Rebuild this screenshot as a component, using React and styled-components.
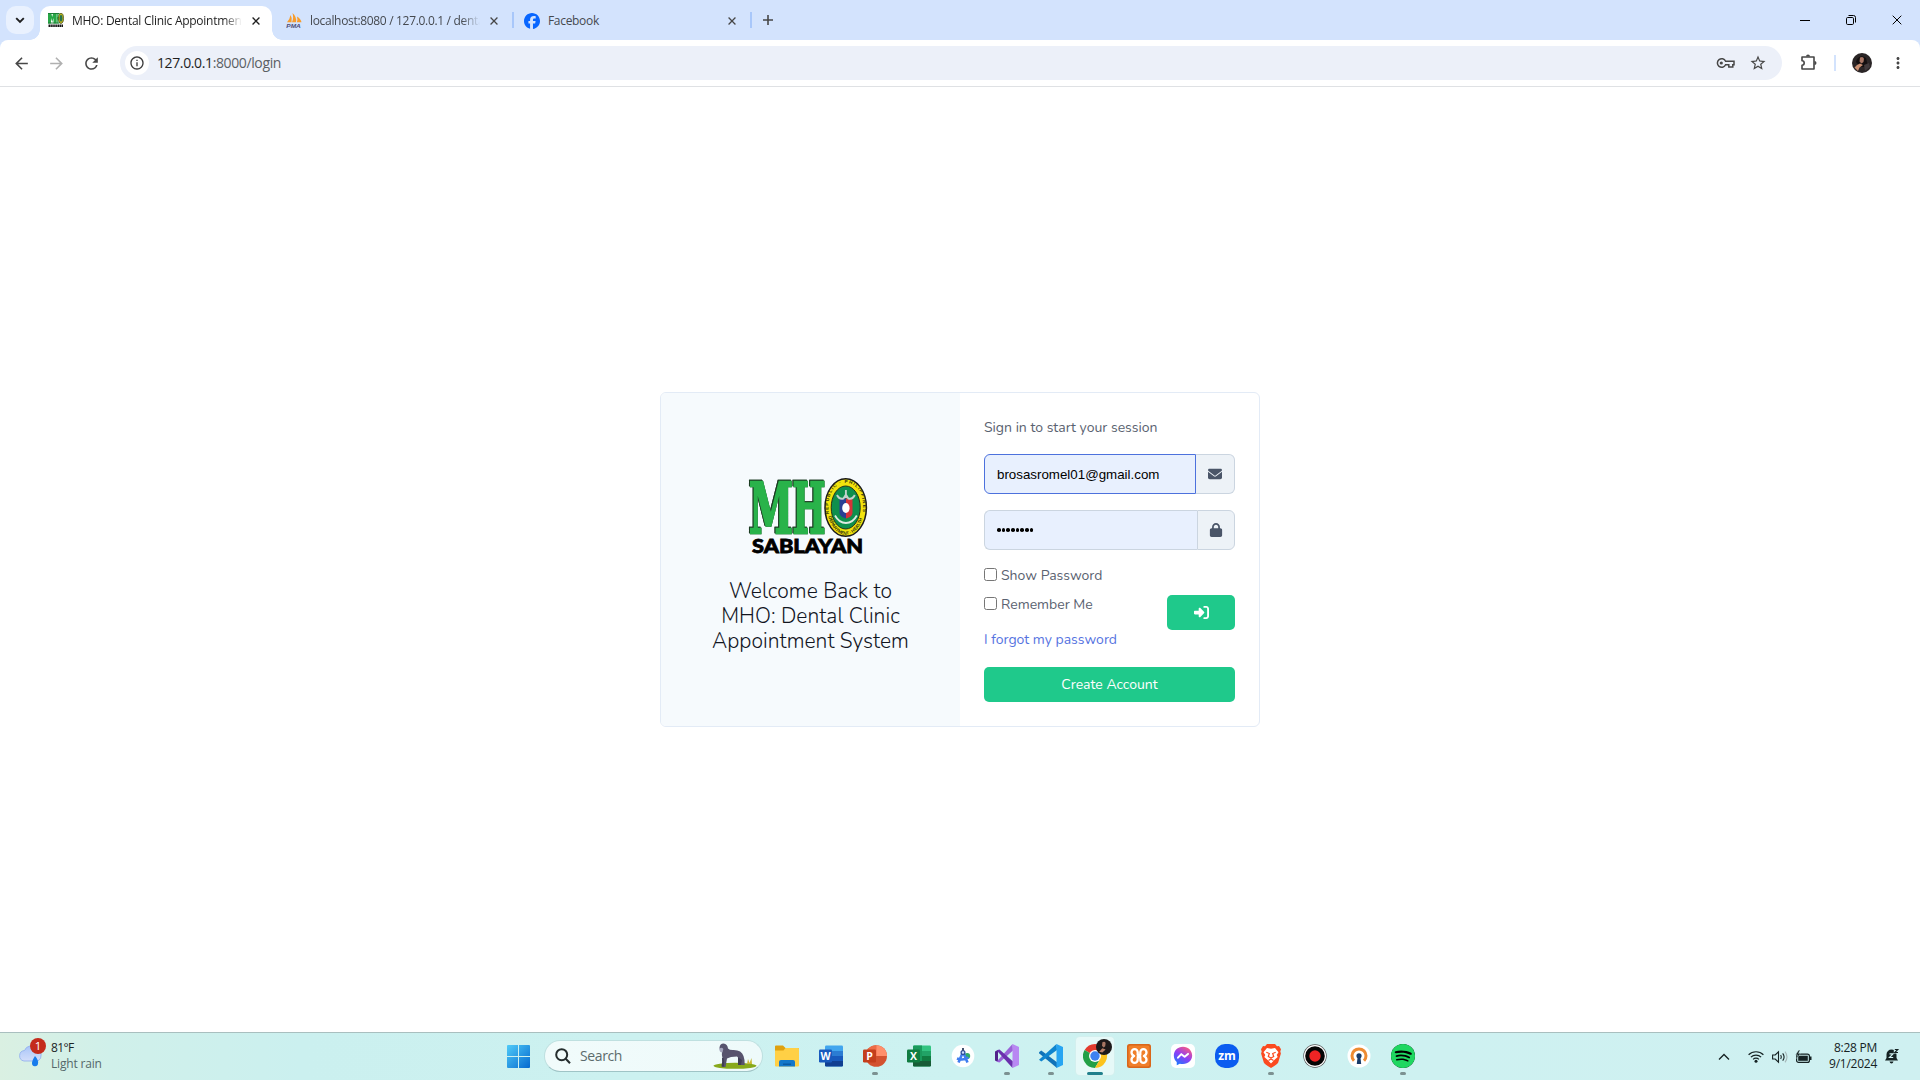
import React from "react";
import styled, { createGlobalStyle } from "styled-components";
import { FaEnvelope, FaLock, FaRightToBracket } from "react-icons/fa6";
import { SiSpotify, SiFacebook } from "react-icons/si";
import { MdArrowBack, MdArrowForward, MdRefresh, MdInfoOutline, MdStarBorder, MdMoreVert } from "react-icons/md";

const ui = `"Open Sans", "Noto Sans", sans-serif`;
const body = `"Nunito", "Open Sans", sans-serif`;

const Global = createGlobalStyle`
  * { box-sizing: border-box; }
  body { margin: 0; background: #fff; overflow: hidden; }
  button { border: 0; padding: 0; background: none; font: inherit; color: inherit; }
  svg { display: block; flex: none; }
`;

const Screen = styled.div`
  width: 1920px;
  height: 1080px;
  display: flex;
  flex-direction: column;
  overflow: hidden;
  font-family: ${ui};
`;

/* ---------- browser ---------- */
const TabStrip = styled.div`
  height: 40px;
  background: #d3e3fd;
  display: flex;
  align-items: stretch;
  padding: 0 18px 0 6px;
`;
const TabSearch = styled.button`
  width: 28px;
  height: 28px;
  margin: 6px 6px 0 0;
  border-radius: 10px;
  background: #e9f1fe;
  display: grid;
  place-items: center;
`;
const Tab = styled.div`
  width: ${(p) => p.$w}px;
  height: 34px;
  margin-top: 6px;
  display: flex;
  align-items: center;
  padding: 0 ${(p) => (p.$active ? 10 : 12)}px 5px ${(p) => p.$pl}px;
  gap: ${(p) => p.$gap}px;
  background: ${(p) => (p.$active ? "#fff" : "transparent")};
  border-radius: 10px 10px 0 0;
  position: relative;
  ${(p) => p.$active && `
    &::before, &::after {
      content: ""; position: absolute; bottom: 0; width: 10px; height: 10px;
    }
    &::before { left: -10px; background: radial-gradient(circle at 0 0, transparent 9.5px, #fff 10px); }
    &::after { right: -10px; background: radial-gradient(circle at 100% 0, transparent 9.5px, #fff 10px); }
  `}
`;
const TabTitle = styled.div`
  flex: 1;
  min-width: 0;
  overflow: hidden;
  white-space: nowrap;
  font-size: 12px;
  line-height: 18px;
  letter-spacing: ${(p) => p.$ls}px;
  color: ${(p) => (p.$active ? "#1f1f1f" : "#45494f")};
  mask-image: ${(p) => (p.$fade ? "linear-gradient(90deg, #000 calc(100% - 18px), transparent)" : "none")};
`;
const CloseBox = styled.button`
  width: 12px;
  height: 16px;
  display: grid;
  place-items: center;
`;
const TabRule = styled.div`
  width: 2px;
  height: 16px;
  margin-top: 12px;
  background: #a8c7fa;
`;
const NewTab = styled.button`
  width: 32px;
  display: grid;
  place-items: center;
`;
const WindowButtons = styled.div`
  margin-left: auto;
  display: flex;
  align-items: center;
  gap: 36px;
`;
const ToolbarBack = styled.div`
  background: #d3e3fd;
`;
const Toolbar = styled.div`
  height: 47px;
  background: #fff;
  border-radius: 8px 8px 0 0;
  border-bottom: 1px solid #dfe1e4;
  display: flex;
  align-items: center;
  padding: 0 12px;
`;
const NavButtons = styled.div`
  display: flex;
  gap: 16px;
  width: 108px;
  color: #474747;
`;
const Omnibox = styled.div`
  width: 1662px;
  height: 34px;
  border-radius: 17px;
  background: #ecf0f9;
  display: flex;
  align-items: center;
  padding: 0 15px 0 5px;
  color: #474747;
`;
const InfoDot = styled.div`
  width: 24px;
  height: 24px;
  border-radius: 50%;
  background: #fff;
  display: grid;
  place-items: center;
  color: #3c3c3c;
`;
const Url = styled.div`
  flex: 1;
  margin-left: 8px;
  padding-bottom: 1px;
  font-size: 14px;
  letter-spacing: -0.38px;
  color: #5b5f64;
  b { font-weight: 400; color: #1f1f1f; }
`;
const OmniIcons = styled.div`
  display: flex;
  align-items: center;
  gap: 14px;
`;
const ToolIcons = styled.div`
  display: flex;
  align-items: center;
  margin-left: 16px;
  color: #474747;
`;
const ToolRule = styled.div`
  width: 2px;
  height: 16px;
  background: #d3e3fd;
  margin: 0 16px 0 16px;
`;

/* ---------- page ---------- */
const Page = styled.main`
  flex: 1;
  display: flex;
  align-items: flex-start;
  justify-content: center;
  padding-top: 305px;
  background: #fff;
`;
const Card = styled.section`
  width: 600px;
  height: 335px;
  display: flex;
  border: 1px solid #e3ebf6;
  border-radius: 6px;
  overflow: hidden;
`;
const Intro = styled.div`
  width: 299px;
  background: #f6fafd;
  display: flex;
  flex-direction: column;
  align-items: center;
  padding-top: 83px;
`;
const Welcome = styled.h1`
  margin: 23px 0 0;
  font: 300 21px/25.2px ${body};
  color: #12151f;
  text-align: center;
`;
const WelcomeLine = styled.span`
  display: block;
  letter-spacing: 0.05px;
`;
const Form = styled.div`
  flex: 1;
  padding: 24px;
  font: 400 14px/21px ${body};
  color: #5a6270;
`;
const Lead = styled.p`
  margin: 0 0 16px;
`;
const InputGroup = styled.div`
  display: flex;
  height: 40px;
  margin-bottom: ${(p) => p.$mb}px;
`;
const Field = styled.div`
  flex: 1;
  border: 1px solid ${(p) => (p.$focus ? "#4c71dd" : "#cbd5e0")};
  border-right-width: ${(p) => (p.$focus ? 1 : 0)}px;
  border-radius: 6px 0 0 6px;
  background: #e8f0fe;
  display: flex;
  align-items: center;
  padding-left: 12px;
  color: #000;
  font: 13.33px "Liberation Sans", Arial, sans-serif;
`;
const Dots = styled.div`
  display: flex;
  gap: 1.1px;
`;
const Dot = styled.i`
  width: 3.6px;
  height: 3.6px;
  border-radius: 50%;
  background: #000;
`;
const Addon = styled.div`
  width: ${(p) => p.$w}px;
  display: grid;
  place-items: center;
  background: #edf2f7;
  color: #4a5568;
  border: 1px solid #cbd5e0;
  border-left-width: ${(p) => (p.$plain ? 0 : 1)}px;
  border-radius: 0 6px 6px 0;
`;
const Check = styled.label`
  display: flex;
  align-items: flex-start;
  gap: 4px;
  height: 22px;
`;
const Box = styled.span`
  width: 13px;
  height: 13px;
  margin-top: 3px;
  border: 1px solid #767676;
  border-radius: 2.5px;
  background: #fff;
`;
const Row = styled.div`
  display: flex;
  justify-content: space-between;
  align-items: flex-start;
  margin-top: 7px;
  height: 35px;
`;
const Button = styled.button`
  width: ${(p) => p.$w};
  height: 35px;
  margin-top: ${(p) => p.$mt || 0}px;
  border-radius: 5px;
  background: #1fc98b;
  color: #fff;
  display: grid;
  place-items: center;
`;
const Forgot = styled.a`
  display: block;
  height: 21px;
  margin-bottom: 17px;
  color: #5673df;
`;

/* ---------- taskbar ---------- */
const Taskbar = styled.footer`
  height: 48px;
  border-top: 1px solid #a9bfbf;
  background: linear-gradient(90deg, #daf0e2 0, #d0f0ea 110px, #cbf0ef 300px, #cdf2f1 50%, #cff0f1 100%);
  display: flex;
  align-items: stretch;
`;
const Weather = styled.div`
  width: 507px;
  padding: 4px 0 0 17px;
  display: flex;
  gap: 5px;
`;
const WeatherText = styled.div`
  font-size: 12px;
  line-height: 16px;
  padding-top: 3px;
  letter-spacing: -0.18px;
  color: #55686a;
  b { display: block; font-weight: 400; color: #1c2526; letter-spacing: -0.6px; }
`;
const StartButton = styled.div`
  padding-top: 12px;
  width: 37px;
`;
const SearchPill = styled.div`
  width: 219px;
  height: 32px;
  margin-top: 7px;
  border-radius: 16px;
  background: linear-gradient(90deg, #f1fbfb, #eefafa);
  border: 1px solid #bfe0e0;
  border-bottom-color: #9fc4c6;
  display: flex;
  align-items: center;
  padding: 0 5px 0 10px;
  font-size: 14px;
  letter-spacing: -0.38px;
  color: #5c6b6c;
  span { flex: 1; margin-left: 9px; padding-bottom: 1px; }
`;
const Apps = styled.div`
  display: flex;
  margin-left: 2px;
`;
const AppSlot = styled.div`
  width: 44px;
  display: flex;
  flex-direction: column;
  align-items: center;
  padding-top: 4px;
`;
const AppTile = styled.div`
  width: 38px;
  height: 38px;
  display: flex;
  flex-direction: column;
  align-items: center;
  padding-top: 7px;
  border-radius: 4px;
  background: ${(p) => (p.$active ? "#e6f9f8" : "transparent")};
  box-shadow: ${(p) => (p.$active ? "0 0 0 1px #d3efee" : "none")};
`;
const Running = styled.div`
  width: ${(p) => (p.$active ? 16 : 6)}px;
  height: 3px;
  border-radius: 2px;
  margin-top: 4px;
  background: ${(p) => (p.$active ? "#21808d" : "#7c9191")};
`;
const IconPlate = styled.div`
  width: 24px;
  height: 24px;
  border-radius: ${(p) => p.$r}px;
  background: ${(p) => p.$bg};
  color: ${(p) => p.$fg || "#fff"};
  display: grid;
  place-items: center;
  font: 700 ${(p) => p.$fs || 11}px/20px ${ui};
`;
const ChromeHolder = styled.div`
  width: 24px;
  height: 24px;
  display: flex;
  align-items: flex-end;
  justify-content: flex-start;
`;
const Tray = styled.div`
  margin-left: auto;
  width: 202px;
  display: flex;
  align-items: center;
  color: #152223;
`;
const Clock = styled.div`
  width: 65px;
  text-align: right;
  font-size: 12px;
  line-height: 16px;
  margin: 0 7px 1px 0;
  letter-spacing: -0.25px;
  white-space: nowrap;
`;
const Gap = styled.div`
  width: ${(p) => p.$w}px;
`;

const Cross = ({ s = 8, w = 1.6, c = "#474747" }) => (
  <svg width={s} height={s} viewBox="0 0 10 10" stroke={c} strokeWidth={w} fill="none"><path d="M0.7 0.7 9.3 9.3M9.3 0.7 0.7 9.3" /></svg>
);

const SlabText = styled.text`
  font-family: "DejaVu Serif", serif;
  font-weight: 700;
  font-size: 69px;
  fill: #29b34a;
  stroke: #29b34a;
  stroke-width: 2.4px;
`;
const Letters = styled.g`
  filter: drop-shadow(0.5px 0 0.3px #1c3b22) drop-shadow(-0.5px -0.5px 0.3px #1c3b22);
`;
const Logo = () => (
  <svg width="125" height="80" viewBox="0 0 125 80">
    <Letters>
      <SlabText x="1" y="57" textLength="44" lengthAdjust="spacingAndGlyphs">M</SlabText>
      <SlabText x="44.500" y="57" textLength="33" lengthAdjust="spacingAndGlyphs">H</SlabText>
    </Letters>
    <ellipse cx="97.700" cy="31.500" rx="20.700" ry="28.800" fill="#f2e30c" stroke="#1b1b1b" strokeWidth="1.500" />
    <ellipse cx="97.700" cy="31.500" rx="14.500" ry="21.500" fill="#0f8f4d" stroke="#22301c" />
    <defs>
      <path id="ring" d="M81.700 42C77 22 85 7 97.700 7C110.400 7 118.400 22 113.700 42" />
      <path id="ringLow" d="M80 39.500C83 51.500 90 58.800 97.700 58.800C105.400 58.800 112.400 51.500 115.400 39.500" />
    </defs>
    <g fontFamily="'Liberation Sans', sans-serif" fontWeight="700" fontSize="4.600" fill="#33330f">
      <text><textPath href="#ring" startOffset="4" textLength="78">REPUBLIC · PHILIPPINES</textPath></text>
      <text><textPath href="#ringLow" startOffset="1" textLength="52">DEPARTMENT · HEALTH</textPath></text>
    </g>
    <path d="M91.500 22.500h6.500v20c-4-1-6.500-3-6.500-6z" fill="#2b3f94" />
    <path d="M98 22.500h6.500v14c0 3-2.500 5-6.500 6z" fill="#d5333a" />
    <ellipse cx="97.900" cy="32" rx="3.700" ry="4.900" fill="#fff" />
    <path d="M97.900 14v8M89 19q2 4.500 6.500 3.500l2.400-4 2.400 4q4.500 1 6.500-3.500" fill="none" stroke="#c3d2cd" strokeWidth="1.900" />
    <path d="M87 39.500q4 7.500 10.900 7.500t10.900-7.500" fill="none" stroke="#dfeae2" strokeWidth="1.800" />
    <text x="4" y="77" textLength="111" lengthAdjust="spacingAndGlyphs" fontFamily="Lato, 'Open Sans', sans-serif" fontWeight="900" fontSize="19.500" stroke="#000" strokeWidth=".8">SABLAYAN</text>
  </svg>
);
const Favicon = () => (
  <svg width="16" height="15" viewBox="0 0 16 15">
    <path d="M0 0h3.200l1 4 1-4H8v10.500H5.500V5L4.200 9 3 5v5.500H0zM8.300 0h1.500v4h.8V0h1v10.500h-1V6.500h-.8v4H8.300z" fill="#27a746" />
    <path d="M0 0h11v1H0zM0 9.500h11v1H0z" fill="#1c7d34" />
    <ellipse cx="13" cy="5.300" rx="2.700" ry="5.200" fill="#b7b21c" stroke="#2c3217" strokeWidth=".6" />
    <ellipse cx="13" cy="5.300" rx="1.400" ry="3.200" fill="#24724e" />
    <path d="M.5 12.800h14.500" stroke="#161616" strokeWidth="2.400" strokeDasharray="1.500 .4" />
  </svg>
);

const Avatar = ({ s }) => (
  <svg width={s} height={s} viewBox="0 0 20 20">
    <circle cx="10" cy="10" r="10" fill="#2a2526" />
    <path d="M5 6q4-5 9-1l1.500 6-3 3H8L4 9z" fill="#130f10" /><path d="M8 4.500q3-1.500 4 1l-.5 3.500-2 1.500-2-2z" fill="#a87664" />
    <path d="M2.500 14.500 5 12l3-1.500 3 1.500-3.500 2.500L6 18z" fill="#c98f72" /><path d="M12 12l5-2 1 4-5 4z" fill="#413a3c" />
  </svg>
);

const PmaIcon = () => (
  <svg width="16" height="15" viewBox="0 0 16 15">
    <path d="M1 9.200Q4 6 4.500 2Q6.500 5 5.500 9.200zM6 9.200Q8 5 6.500 0Q11 4 10 9.200zM10.800 9.200Q12 7 11 3.500Q15 6 15.500 9.200z" fill="#f89c2b" />
    <text x=".3" y="14.500" fontFamily="'Liberation Sans', sans-serif" fontWeight="700" fontStyle="italic" fontSize="6" textLength="14.500" lengthAdjust="spacingAndGlyphs" fill="#4c4c78">PMA</text>
  </svg>
);

const Office = ({ letter, cols, tile, round }) => (
  <svg width="24" height="24" viewBox="0 0 24 24">
    {round ? (
      <g><circle cx="13.200" cy="12" r="10.800" fill={cols[2]} /><path d="M13.200 1.200A10.800 10.800 0 0 1 24 12H13.200z" fill={cols[0]} /><path d="M2.400 12A10.800 10.800 0 0 1 13.200 1.200V12z" fill={cols[1]} /></g>
    ) : (
      <g><rect x="6" y="1.500" width="18" height="21" rx="1.300" fill={cols[0]} /><path d="M6 7h18v5H6z" fill={cols[1]} /><path d="M6 12h18v5H6z" fill={cols[2]} /><path d="M6 17h18v4.200q0 1.300-1.300 1.300H7.300Q6 22.500 6 21.200z" fill={cols[3]} />
        {letter === "X" && <path d="M6 2.800Q6 1.500 7.300 1.500H15V17H6z" fill="#1a9a5c" />}</g>
    )}
    <rect y="5.500" width="13" height="13" rx="1.200" fill={tile} />
    <text x="6.500" y="15.800" textAnchor="middle" fontFamily="'Open Sans', sans-serif" fontWeight="700" fontSize="10.500" fill="#fff">{letter}</text>
  </svg>
);

const Explorer = () => (
  <svg width="24" height="24" viewBox="0 0 24 24">
    <path d="M0 2.500Q0 1.500 1 1.500H8L10.500 4H23Q24 4 24 5V10H0z" fill="#dfa10e" /><path d="M0 6.500H8.500L10.500 4H23Q24 4 24 5V21.500Q24 22.500 23 22.500H1Q0 22.500 0 21.500z" fill="#ffd045" />
    <path d="M4 22.500V18q0-2 2-2H18q2 0 2 2v4.500z" fill="#1377c9" /><path d="M8 19.500h8v1.500H8z" fill="#0a5aa3" />
  </svg>
);
const Studio = () => (
  <svg width="24" height="24" viewBox="0 0 24 24">
    <circle cx="12" cy="12" r="11.300" fill="#fff" /><circle cx="16.200" cy="12" r="3" fill="#2faa67" />
    <path d="M12 8 7.500 18.500M12 8l4.500 10.500M6 14.500q6 2.500 11.500-1" fill="none" stroke="#3f7df0" strokeWidth="2.600" /><circle cx="12" cy="8.500" r="1.900" fill="#cfe0ff" stroke="#2d4f9e" strokeWidth="1.300" /><path d="M12 4v2.500" stroke="#2d3f5e" strokeWidth="1.800" />
  </svg>
);
const VisualStudio = () => (
  <svg width="24" height="24" viewBox="0 0 24 24">
    <path d="M0 7.500 3 6v12l-3-1.500z" fill="#52218a" />
    <path d="M1.500 17.800 17.500 0 18 6.500 4.500 18.500z" fill="#9a63d8" />
    <path d="M1.500 6.200 4.500 5.500 18 17.500 17.500 24z" fill="#6a30ad" />
    <path d="M17.500 0 24 3V21l-6.500 3z" fill="#b888f2" />
  </svg>
);
const Code = () => (
  <svg width="24" height="24" viewBox="0 0 24 24">
    <path d="M0 8.200 2.300 6.500 18 18.200V24L.3 9.500z" fill="#1072b8" /><path d="M0 15.800 17.500 0 18 5.900 2.300 17.500z" fill="#0f85cf" /><path d="M17.500 0 24 3V21l-6.500 3z" fill="#27a5f2" />
  </svg>
);
const Chrome = () => (
  <svg width="30" height="30" viewBox="0 0 30 30">
    <path d="M12 18 1.600 12A12 12 0 0 1 22.400 12H12z" fill="#e33b2e" /><path d="M12 18 1.600 12A12 12 0 0 0 12 30l5.200-9z" fill="#23a047" /><path d="M12 12H22.400A12 12 0 0 1 12 30l5.200-9z" fill="#fcc31e" />
    <circle cx="12" cy="18" r="6" fill="#fff" /><circle cx="12" cy="18" r="4.700" fill="#3e82f1" />
    <svg x="13" y="1" width="16" height="16" viewBox="0 0 20 20"><circle cx="10" cy="10" r="10" fill="#1d191a" /><path d="M8 4q3-1.500 4 1l-.5 4-2 1.500-2-2z" fill="#a87664" /><path d="M4 16l4-4.500 4 1.500-4 4z" fill="#b97f68" /></svg>
  </svg>
);
const Xampp = () => (
  <svg width="24" height="24" viewBox="0 0 24 24">
    <rect width="24" height="24" rx="2.500" fill="#d9661a" /><rect x="1.500" y="1.500" width="21" height="21" rx="2" fill="#f07f2a" />
    <path d="M10.700 11V8.200a3.100 3.100 0 0 0-6.200 0q0 2.600 2.600 3.800-2.600 1.200-2.600 3.800a3.100 3.100 0 0 0 6.200 0V13h2.600v2.800a3.100 3.100 0 0 0 6.200 0q0-2.600-2.600-3.800 2.600-1.200 2.600-3.800a3.100 3.100 0 0 0-6.200 0V11z" fill="none" stroke="#fff" strokeWidth="2.300" strokeLinejoin="round" />
  </svg>
);
const OpenVpn = () => (
  <svg width="24" height="24" viewBox="0 0 24 24"><circle cx="12" cy="12" r="11.500" fill="#fff" /><path d="M7 16.800A7 7 0 1 1 17 16.800" fill="none" stroke="#ee8b32" strokeWidth="3" /><circle cx="12" cy="11.800" r="2.600" fill="#183a68" /><path d="M10.600 13h2.800l.8 7H9.800z" fill="#183a68" /></svg>
);
const Recorder = () => (
  <svg width="24" height="24" viewBox="0 0 24 24"><circle cx="12" cy="12" r="11.700" fill="#555" /><circle cx="12" cy="12" r="11" fill="#fff" /><circle cx="12" cy="12" r="9.800" fill="#050505" /><circle cx="12" cy="12" r="5.700" fill="#ee2424" /></svg>
);
const Messenger = () => (
  <svg width="20" height="20" viewBox="0 0 24 24">
    <defs><linearGradient id="msg" x1=".2" y1="1" x2=".8" y2="0"><stop stopColor="#167dff" /><stop offset=".5" stopColor="#8e3df5" /><stop offset="1" stopColor="#ff5d7c" /></linearGradient></defs>
    <path fill="url(#msg)" d="M12 1C5.600 1 1 5.600 1 11.500c0 3.200 1.300 5.900 3.500 7.800v3.900l3.600-2c1.200.4 2.500.5 3.900.5 6.400 0 11-4.500 11-10.200S18.400 1 12 1z" />
    <path d="M6 14 10 9.800l4 3.200 4-3.500" fill="none" stroke="#fff" strokeWidth="2.400" strokeLinecap="round" strokeLinejoin="round" />
  </svg>
);
const Brave = () => (
  <svg width="24" height="24" viewBox="0 0 24 24"><path d="M8 0h8l2 2.200 2-.2 2 3.200-.7 2.200.6 2-2.700 9Q18.500 20 12 24q-6.500-4-7.200-5.600l-2.700-9 .6-2L2 5.200 4 2l2 .2z" fill="#fb4a20" /><path d="M12 4.800 16 4l3.500 4.300-1.800 2.700 1 2-3.400 3L12 19.500l-3.300-3.500-3.400-3 1-2-1.800-2.700L8 4z" fill="#fff" /><path d="M7.300 8.300l3 1.200-1 3 2.700 1.500 2.700-1.500-1-3 3-1.200M9.500 16.500 12 15l2.500 1.500" fill="none" stroke="#fb4a20" strokeWidth="1.200" /></svg>
);
const Gorilla = () => (
  <svg width="44" height="26" viewBox="0 0 44 26">
    <ellipse cx="22" cy="22.800" rx="21.500" ry="3" fill="#87a91b" /><path d="M34 21l1-5 1.500 4 2-5 .5 6z" fill="#c9b934" />
    <path d="M6.500 4.500Q7 .5 10.500.5q4 .5 4.500 5 1.500 1.500 4.500 1.500 9-.5 11 6 1.500 4 1.200 9H28l-.5-5-3.500-3.500-6 .5-4 1.500-1.500 8.500H9q1-5 .5-9-1-4-.5-6-2.500-1-2.500-4.500z" fill="#57536d" />
    <path d="M10.500 15q1 4 .5 8.500H8.500Q9.500 19 9 15zM25 14l4 3-1 5h-3z" fill="#403d55" />
    <path d="M6.500 5.500q2.500-1.500 3.800.5l-.8 3.500Q6 9.500 6.500 5.500z" fill="#a5a6bd" />
  </svg>
);
const Cloud = () => (
  <svg width="29" height="32" viewBox="0 0 29 32">
    <defs><linearGradient id="cl" x1="0" y1="0" x2="0" y2="1"><stop stopColor="#a9c5f8" /><stop offset="1" stopColor="#d3defa" /></linearGradient></defs>
    <path d="M7 24a5.300 5.300 0 0 1 .5-10.500 7 7 0 0 1 12-2 7 7 0 0 1 1.500 12.500z" fill="url(#cl)" stroke="#8eaced" strokeWidth=".8" />
    <path d="M18 19q4 4.500 3 7.500a3 3 0 0 1-6-.5q0-2.500 3-7z" fill="#187cec" />
    <circle cx="21" cy="9" r="8" fill="#c42b1c" /><text x="21" y="13" textAnchor="middle" fontFamily="'Open Sans', sans-serif" fontSize="11.500" fill="#fff">1</text>
  </svg>
);

const apps = [
  { name: "explorer", icon: <Explorer /> },
  { name: "word", icon: <Office letter="W" tile="#185abd" cols={["#41a5ee", "#2b7cd3", "#185abd", "#103f91"]} /> },
  { name: "powerpoint", icon: <Office round letter="P" tile="#c43e1c" cols={["#ff8f6b", "#ed6c47", "#d35230"]} />, run: 1 },
  { name: "excel", icon: <Office letter="X" tile="#107c41" cols={["#33c481", "#21a366", "#107c41", "#185c37"]} /> },
  { name: "studio", icon: <Studio /> },
  { name: "vs", icon: <VisualStudio />, run: 1 },
  { name: "code", icon: <Code />, run: 1 },
  { name: "chrome", icon: <ChromeHolder><Chrome /></ChromeHolder>, run: 1, active: 1 },
  { name: "xampp", icon: <Xampp /> },
  { name: "messenger", icon: <IconPlate $r={5} $bg="#fff"><Messenger /></IconPlate> },
  { name: "zoom", icon: <IconPlate $r={10} $bg="#0b5cf0" $fs={12}>zm</IconPlate> },
  { name: "brave", icon: <Brave />, run: 1 },
  { name: "recorder", icon: <Recorder /> },
  { name: "vpn", icon: <OpenVpn /> },
  { name: "spotify", icon: <IconPlate $r={12} $bg="#000" $fg="#1fd761"><SiSpotify size={24} /></IconPlate>, run: 1 },
];

export default function App() {
  return (
    <Screen>
      <Global />
      <TabStrip>
        <TabSearch><svg width="10" height="7" viewBox="0 0 10 7"><path d="M1.200 1.200 5 5l3.800-3.800" fill="none" stroke="#1f1f1f" strokeWidth="1.900" /></svg></TabSearch>
        <Tab $w={232} $active $pl={8} $gap={8}>
          <Favicon />
          <TabTitle $active $fade $ls={-0.27}>MHO: Dental Clinic Appointment</TabTitle>
          <CloseBox><Cross c="#1f1f1f" /></CloseBox>
        </Tab>
        <Tab $w={240} $pl={14} $gap={8}>
          <PmaIcon />
          <TabTitle $fade $ls={-0.32}>localhost:8080 / 127.0.0.1 / dental</TabTitle>
          <CloseBox><Cross /></CloseBox>
        </Tab>
        <TabRule />
        <Tab $w={236} $pl={10} $gap={8}>
          <SiFacebook size={16} color="#0866ff" />
          <TabTitle $ls={-0.32}>Facebook</TabTitle>
          <CloseBox><Cross /></CloseBox>
        </Tab>
        <TabRule />
        <NewTab><svg width="10" height="10" viewBox="0 0 10 10"><path d="M5 0v10M0 5h10" stroke="#474747" strokeWidth="1.600" /></svg></NewTab>
        <WindowButtons>
          <svg width="10" height="10" viewBox="0 0 10 10"><path d="M0 5.500h10" stroke="#000" /></svg>
          <svg width="10" height="10" viewBox="0 0 10 10" fill="none" stroke="#000"><rect x=".5" y="2.500" width="7" height="7" rx="1.200" /><path d="M2.500 .5H7.500Q9.500 .5 9.500 2.500V7.500" /></svg>
          <Cross s={10} w={1} c="#000" />
        </WindowButtons>
      </TabStrip>
      <ToolbarBack>
        <Toolbar>
          <NavButtons>
            <MdArrowBack size={19} /><MdArrowForward size={19} color="#b0b0b0" /><MdRefresh size={19} />
          </NavButtons>
          <Omnibox>
            <InfoDot><MdInfoOutline size={16} /></InfoDot>
            <Url><b>127.0.0.1</b>:8000/login</Url>
            <OmniIcons>
              <svg width="19" height="12" viewBox="0 0 19 12" fill="none" stroke="#474747" strokeWidth="1.500"><path d="M9.600 4.200A4.300 4.300 0 1 0 9.600 7.800h3.200v2.200h4V7.800H18V4.200z" /><circle cx="5.300" cy="6" r="1.600" fill="#474747" stroke="none" /></svg>
              <MdStarBorder size={18} />
            </OmniIcons>
          </Omnibox>
          <ToolIcons>
            <svg width="20" height="20" viewBox="0 0 20 20" fill="none" stroke="#474747" strokeWidth="1.600"><path d="M4 4h12v12H4v-3.800a2.200 2.200 0 0 0 0-4.400z" strokeLinejoin="round" /><path d="M8 3.500a2 2 0 0 1 4 0zM16.500 8a2 2 0 0 1 0 4z" fill="#474747" stroke="none" /></svg>
            <ToolRule />
            <Avatar s={20} />
            <Gap $w={17} />
            <MdMoreVert size={18} />
          </ToolIcons>
        </Toolbar>
      </ToolbarBack>

      <Page>
        <Card>
          <Intro>
            <Logo />
            <Welcome>
              <WelcomeLine>Welcome Back to</WelcomeLine>
              <WelcomeLine>MHO: Dental Clinic</WelcomeLine>
              <WelcomeLine>Appointment System</WelcomeLine>
            </Welcome>
          </Intro>
          <Form>
            <Lead>Sign in to start your session</Lead>
            <InputGroup $mb={16}>
              <Field $focus>brosasromel01@gmail.com</Field>
              <Addon $w={39} $plain><FaEnvelope size={14} /></Addon>
            </InputGroup>
            <InputGroup $mb={15}>
              <Field><Dots>{Array.from({ length: 8 }, (_, i) => <Dot key={i} />)}</Dots></Field>
              <Addon $w={38}><FaLock size={14} /></Addon>
            </InputGroup>
            <Check><Box />Show Password</Check>
            <Row>
              <Check><Box />Remember Me</Check>
              <Button $w="68px" $mt={1}><FaRightToBracket size={15} /></Button>
            </Row>
            <Forgot>I forgot my password</Forgot>
            <Button $w="100%">Create Account</Button>
          </Form>
        </Card>
      </Page>

      <Taskbar>
        <Weather>
          <Cloud />
          <WeatherText><b>81°F</b>Light rain</WeatherText>
        </Weather>
        <StartButton>
          <svg width="23" height="23" viewBox="0 0 23 23"><defs><linearGradient id="win" x1="0" y1="0" x2="1" y2="1"><stop stopColor="#4fcbf8" /><stop offset="1" stopColor="#0669cf" /></linearGradient></defs><path d="M1 0h10v11H0V1q0-1 1-1zM12 0h10q1 0 1 1v10H12zM0 12h11v11H1q-1 0-1-1zM12 12h11v10q0 1-1 1H12z" fill="url(#win)" /></svg>
        </StartButton>
        <SearchPill>
          <svg width="16" height="16" viewBox="0 0 16 16" fill="none" stroke="#252d2e" strokeWidth="2"><circle cx="6.700" cy="6.700" r="5.500" /><path d="m10.500 10.500 4.500 4.700" /></svg>
          <span>Search</span>
          <Gorilla />
        </SearchPill>
        <Apps>
          {apps.map((a) => (
            <AppSlot key={a.name}>
              <AppTile $active={a.active}>
                {a.icon}
                {a.run && <Running $active={a.active} />}
              </AppTile>
            </AppSlot>
          ))}
        </Apps>
        <Tray>
          <svg width="12" height="8" viewBox="0 0 12 8"><path d="M1 6.500 6 1.500l5 5" fill="none" stroke="currentColor" strokeWidth="1.300" /></svg>
          <Gap $w={18} />
          <svg width="16" height="13" viewBox="0 0 16 13" fill="none" stroke="currentColor" strokeWidth="1.200"><path d="M.6 4.800a10.500 10.500 0 0 1 14.800 0M2.900 7.200a7.200 7.200 0 0 1 10.200 0M5.100 9.400a4.100 4.100 0 0 1 5.800 0" /><circle cx="8" cy="11.200" r="1.500" fill="currentColor" stroke="none" /></svg>
          <Gap $w={8} />
          <svg width="16" height="14" viewBox="0 0 16 14" fill="none" stroke="currentColor" strokeWidth="1.100"><path d="M.6 5h2.600L6.500 1.800v10.400L3.200 9H.6z" /><path d="M8.700 5q1.300 2 0 4M10.700 3.300q2.800 3.700 0 7.400" /><path d="M13 1.700q4 5.300 0 10.600" stroke="#a7b9ba" /></svg>
          <Gap $w={7} />
          <svg width="17" height="14" viewBox="0 0 17 14"><rect x="1.600" y="4.100" width="12.800" height="8.300" rx="2" fill="none" stroke="currentColor" strokeWidth="1.200" /><rect x="3.200" y="5.700" width="9.600" height="5.100" fill="currentColor" /><path d="M15 6.500h1.500v3.500H15z" fill="currentColor" /><path d="M3.800 0 .5 4.800h2L1.600 8.500 5.500 3.500H3.500L5 0z" fill="currentColor" stroke="#cff0f1" strokeWidth=".4" /></svg>
          <Clock>8:28 PM<br />9/1/2024</Clock>
          <svg width="17" height="17" viewBox="0 0 17 17"><path d="M1 12.500 2.500 10V6.500a5 5 0 0 1 10 0V10l1.500 2.500zM5.500 13.500h4q-.5 2-2 2t-2-2z" fill="currentColor" /><path d="M5.500 5.800h3.500l-3.500 3.700h3.700" fill="none" stroke="#cff0f1" strokeWidth="1.200" /><path d="M9.800 0h5v5.500h-5z" fill="#cff0f1" /><path d="M10.800 1.500h3l-3 3h3.200" fill="none" stroke="currentColor" strokeWidth="1.100" /></svg>
        </Tray>
      </Taskbar>
    </Screen>
  );
}
